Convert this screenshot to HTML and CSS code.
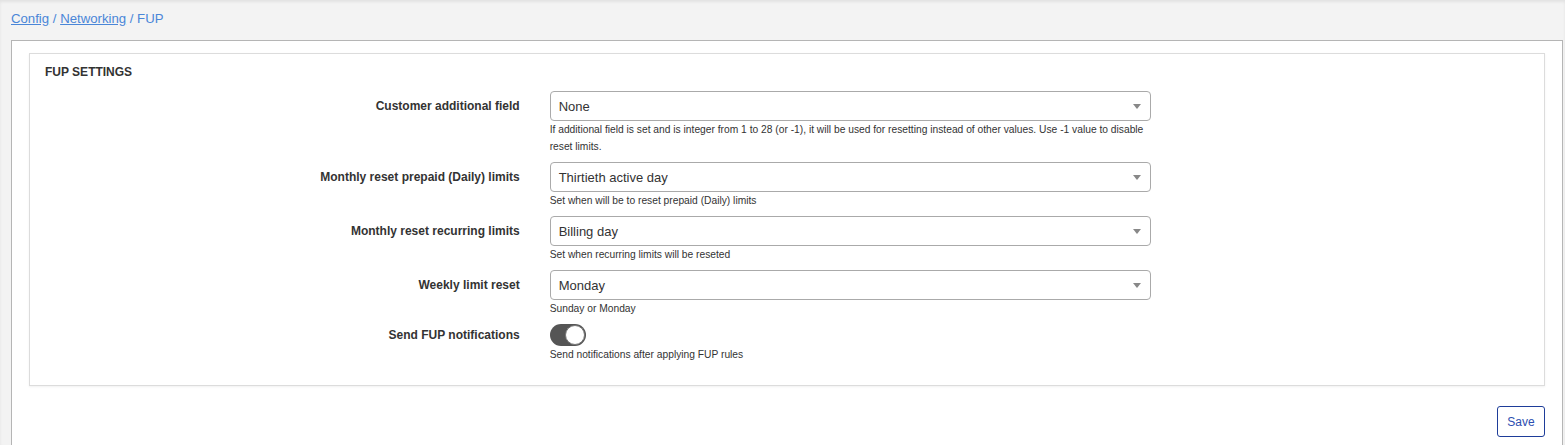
FILE: index.html
```html
<!DOCTYPE html>
<html>
<head>
<meta charset="utf-8">
<link rel="stylesheet" href="styles.css">
</head>
<body>
<div class="page">
  <nav class="breadcrumb">
    <a href="#">Config</a> / <a href="#">Networking</a> / FUP
  </nav>
  <div class="panel">
    <section class="card">
      <h2 class="card-title">FUP SETTINGS</h2>
      <div class="form">
        <div class="row">
          <label class="label">Customer additional field</label>
          <div class="control">
            <div class="select"><span>None</span><i class="caret"></i></div>
            <p class="help">If additional field is set and is integer from 1 to 28 (or -1), it will be used for resetting instead of other values. Use -1 value to disable reset limits.</p>
          </div>
        </div>
        <div class="row">
          <label class="label">Monthly reset prepaid (Daily) limits</label>
          <div class="control">
            <div class="select"><span>Thirtieth active day</span><i class="caret"></i></div>
            <p class="help">Set when will be to reset prepaid (Daily) limits</p>
          </div>
        </div>
        <div class="row">
          <label class="label">Monthly reset recurring limits</label>
          <div class="control">
            <div class="select"><span>Billing day</span><i class="caret"></i></div>
            <p class="help">Set when recurring limits will be reseted</p>
          </div>
        </div>
        <div class="row">
          <label class="label">Weekly limit reset</label>
          <div class="control">
            <div class="select"><span>Monday</span><i class="caret"></i></div>
            <p class="help">Sunday or Monday</p>
          </div>
        </div>
        <div class="row row-toggle">
          <label class="label">Send FUP notifications</label>
          <div class="control">
            <div class="toggle"><span class="knob"></span></div>
            <p class="help">Send notifications after applying FUP rules</p>
          </div>
        </div>
      </div>
    </section>
    <div class="actions">
      <button class="btn">Save</button>
    </div>
  </div>
</div>
</body>
</html>
```
FILE: styles.css
```css
html, body {
  margin: 0;
  padding: 0;
}
body {
  background: #f3f3f3;
  font-family: "Liberation Sans", Arial, sans-serif;
  color: #333;
  box-shadow: inset 0 2px 3px rgba(0, 0, 0, 0.07);
  height: 445px;
  overflow: hidden;
}
.page {
  padding: 0 2px 0 11px;
}
.breadcrumb {
  font-size: 13.2px;
  line-height: 15px;
  padding: 11px 0 14px;
  color: #4a86d8;
}
.breadcrumb a {
  color: #4a86d8;
  text-decoration: underline;
}
.panel {
  box-sizing: border-box;
  background: #fff;
  border: 1px solid #b5b5b5;
  border-bottom: none;
  padding: 12px 17px 0 17px;
  height: 405px;
}
.card {
  border: 1px solid #dcdcdc;
  box-shadow: 0 1px 2px rgba(0, 0, 0, 0.06);
  padding: 10px 0 22px;
}
.card-title {
  margin: 0 0 10px;
  padding-left: 15px;
  font-size: 12px;
  line-height: 17px;
  font-weight: bold;
  color: #333;
}
.form {
  display: flex;
  flex-direction: column;
  gap: 7px;
}
.row {
  display: grid;
  grid-template-columns: 4fr 5fr 3fr;
}
.label {
  grid-column: 1;
  text-align: right;
  padding: 0 15px;
  font-size: 12px;
  font-weight: bold;
  color: #333;
  line-height: 30px;
}
.row-toggle .label {
  line-height: 22px;
}
.control {
  grid-column: 2;
  padding: 0 15px;
}
.select {
  height: 28px;
  border: 1px solid #aaa;
  border-radius: 4px;
  display: flex;
  align-items: center;
  justify-content: space-between;
  padding: 0 9px 0 8px;
  font-size: 13px;
  color: #333;
}
.caret {
  width: 0;
  height: 0;
  border-left: 4px solid transparent;
  border-right: 4px solid transparent;
  border-top: 5px solid #888;
  margin-top: 1px;
}
.help {
  margin: 0;
  font-size: 10.25px;
  line-height: 17px;
  color: #333;
}
.toggle {
  width: 36px;
  height: 22px;
  border-radius: 11px;
  background: #555;
  position: relative;
}
.knob {
  position: absolute;
  right: 1px;
  top: 1px;
  width: 18px;
  height: 18px;
  border-radius: 50%;
  background: #fff;
  border: 1px solid #777;
}
.actions {
  display: flex;
  justify-content: flex-end;
  padding-top: 20px;
}
.btn {
  font-family: "Liberation Sans", Arial, sans-serif;
  font-size: 12px;
  color: #2d4eb0;
  background: #fff;
  border: 1px solid #1e3d99;
  border-radius: 3px;
  width: 48px;
  height: 31px;
  padding: 0;
}
```
